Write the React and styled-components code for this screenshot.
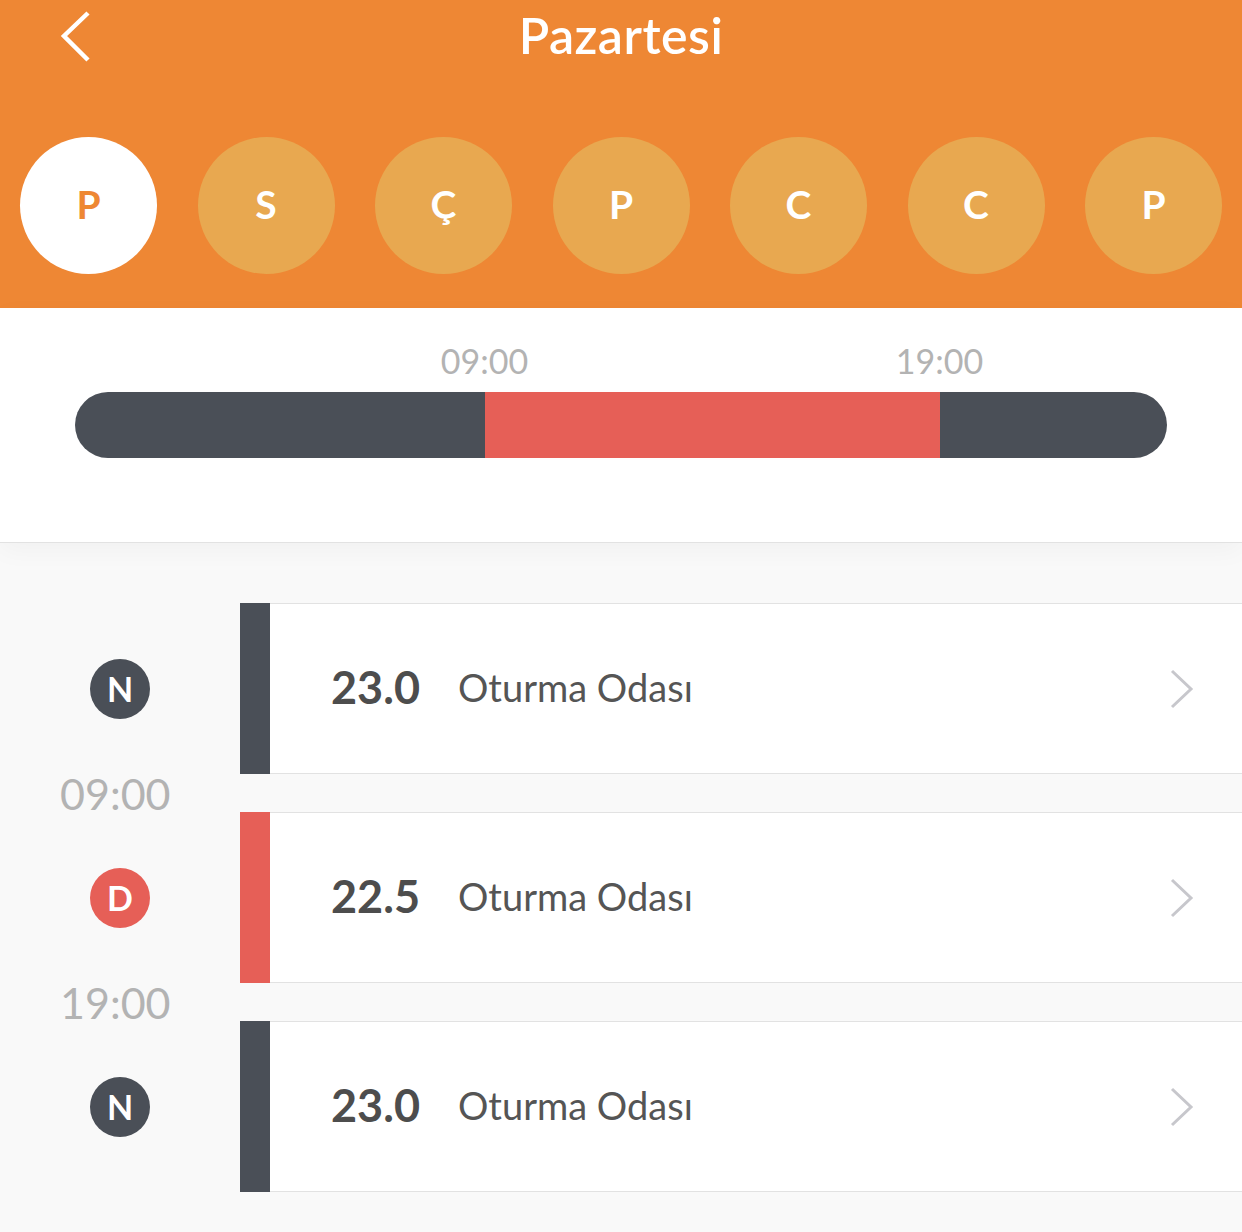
import React from "react";
import styled, { createGlobalStyle } from "styled-components";

const GlobalStyle = createGlobalStyle`
  html, body {
    margin: 0;
    padding: 0;
    background: #f9f9f9;
    font-family: "Lato", "Noto Sans", sans-serif;
  }
  * { box-sizing: border-box; }
`;

const days = ["P", "S", "Ç", "P", "C", "C", "P"];

const periods = [
  { type: "N", value: "23.0", room: "Oturma Odası", color: "#4a4f57" },
  { type: "D", value: "22.5", room: "Oturma Odası", color: "#e65f57" },
  { type: "N", value: "23.0", room: "Oturma Odası", color: "#4a4f57" },
];

const segments = [
  { from: 0, to: 9, color: "#4a4f57" },
  { from: 9, to: 19, color: "#e65f57" },
  { from: 19, to: 24, color: "#4a4f57" },
];

const marks = ["09:00", "19:00"];

const Page = styled.div`
  width: 1242px;
  min-height: 1232px;
  background: #f9f9f9;
`;

const Header = styled.header`
  background: #ee8734;
  height: 308px;
  display: flex;
  flex-direction: column;
`;

const TopBar = styled.div`
  height: 74px;
  display: grid;
  grid-template-columns: 140px 1fr 140px;
  align-items: center;
`;

const BackButton = styled.button`
  background: none;
  border: 0;
  padding: 0 0 0 60px;
  display: flex;
  align-items: center;
  cursor: pointer;
`;

const Title = styled.h1`
  margin: 0 0 4px;
  text-align: center;
  color: #fff;
  font-size: 50px;
  font-weight: 600;
  letter-spacing: 0.5px;
`;

const DayRow = styled.div`
  display: flex;
  justify-content: space-between;
  padding: 63px 20px 0;
`;

const Day = styled.div`
  width: 137px;
  height: 137px;
  border-radius: 50%;
  background: ${(p) => (p.$active ? "#ffffff" : "#e8a850")};
  color: ${(p) => (p.$active ? "#ee8734" : "#ffffff")};
  display: flex;
  align-items: center;
  justify-content: center;
  padding-bottom: 4px;
  font-size: 39px;
  font-weight: 700;
`;

const TimelineSection = styled.section`
  position: relative;
  z-index: 1;
  height: 235px;
  background: #fff;
  border-bottom: 1px solid #e2e2e2;
  box-shadow: 0 8px 24px rgba(0, 0, 0, 0.035);
  padding: 0 75px;
`;

const Scale = styled.div`
  position: relative;
  height: 84px;
`;

const Mark = styled.span`
  position: absolute;
  top: 36px;
  transform: translateX(-50%);
  font-size: 34px;
  line-height: 1;
  color: #b3b3b3;
`;

const Bar = styled.div`
  display: flex;
  height: 66px;
  border-radius: 33px;
  overflow: hidden;
`;

const Segment = styled.div`
  height: 100%;
  background: ${(p) => p.$color};
`;

const List = styled.div`
  padding-top: 60px;
  display: flex;
  flex-direction: column;
`;

const Row = styled.div`
  display: grid;
  grid-template-columns: 240px 1fr;
  height: 171px;
`;

const BadgeCell = styled.div`
  display: flex;
  align-items: center;
  justify-content: center;
`;

const Badge = styled.div`
  width: 60px;
  height: 60px;
  border-radius: 50%;
  background: ${(p) => p.$color};
  color: #fff;
  display: flex;
  align-items: center;
  justify-content: center;
  font-size: 34px;
  font-weight: 700;
`;

const Card = styled.div`
  display: flex;
  align-items: center;
  background: #fff;
  border-top: 1px solid #e2e2e2;
  border-bottom: 1px solid #e2e2e2;
`;

const Stripe = styled.div`
  align-self: stretch;
  width: 30px;
  margin: -1px 0;
  background: ${(p) => p.$color};
`;

const Text = styled.div`
  flex: 1;
  display: flex;
  align-items: center;
  padding-bottom: 4px;
`;

const Value = styled.span`
  margin-left: 61px;
  width: 127px;
  font-size: 45px;
  font-weight: 700;
  color: #4d4d4d;
`;

const Room = styled.span`
  font-size: 38px;
  font-weight: 400;
  color: #555;
`;

const Chevron = styled.svg`
  margin-right: 47px;
`;

const Gap = styled.div`
  height: 38px;
  display: flex;
  align-items: center;
  padding-left: 60px;
`;

const GapTime = styled.span`
  font-size: 43px;
  line-height: 1;
  color: #b3b3b3;
`;

const BackIcon = () => (
  <svg width="32" height="54" viewBox="0 0 32 54">
    <polyline
      points="28,3 4,26 28,50"
      fill="none"
      stroke="#fff"
      strokeWidth="4.5"
    />
  </svg>
);

const ChevronIcon = () => (
  <Chevron width="26" height="40" viewBox="0 0 26 40">
    <polyline
      points="3,2 22,20 3,38"
      fill="none"
      stroke="#c7c7cc"
      strokeWidth="3"
    />
  </Chevron>
);

const App = () => {
  return (
    <Page>
      <GlobalStyle />
      <Header>
        <TopBar>
          <BackButton aria-label="Geri">
            <BackIcon />
          </BackButton>
          <Title>Pazartesi</Title>
          <div />
        </TopBar>
        <DayRow>
          {days.map((d, i) => (
            <Day key={i} $active={i === 0}>
              {d}
            </Day>
          ))}
        </DayRow>
      </Header>

      <TimelineSection>
        <Scale>
          {marks.map((m) => (
            <Mark key={m} style={{ left: `${(parseInt(m, 10) / 24) * 100}%` }}>
              {m}
            </Mark>
          ))}
        </Scale>
        <Bar>
          {segments.map((s, i) => (
            <Segment
              key={i}
              $color={s.color}
              style={{ width: `${((s.to - s.from) / 24) * 100}%` }}
            />
          ))}
        </Bar>
      </TimelineSection>

      <List>
        {periods.map((p, i) => (
          <React.Fragment key={i}>
            {i > 0 && (
              <Gap>
                <GapTime>{marks[i - 1]}</GapTime>
              </Gap>
            )}
            <Row>
              <BadgeCell>
                <Badge $color={p.color}>{p.type}</Badge>
              </BadgeCell>
              <Card>
                <Stripe $color={p.color} />
                <Text>
                  <Value>{p.value}</Value>
                  <Room>{p.room}</Room>
                </Text>
                <ChevronIcon />
              </Card>
            </Row>
          </React.Fragment>
        ))}
      </List>
    </Page>
  );
};

export default App;
